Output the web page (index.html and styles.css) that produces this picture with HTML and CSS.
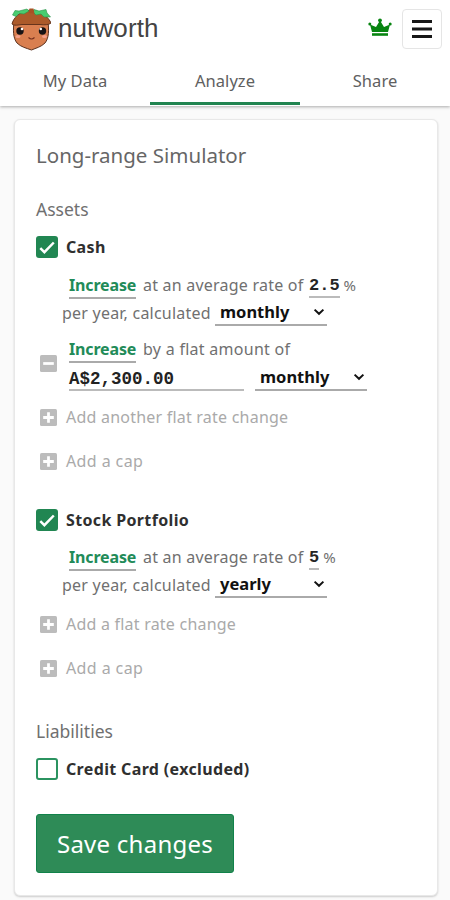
FILE: index.html
```
<!DOCTYPE html>
<html lang="en">
<head>
<meta charset="utf-8">
<title>nutworth</title>
<link rel="stylesheet" href="styles.css">
</head>
<body>
<svg width="0" height="0" class="defs" aria-hidden="true">
  <symbol id="tick" viewBox="0 0 22 22"><rect width="22" height="22" rx="3" fill="#218652"/><path d="M4.3 12.2 8.4 16.2 17.8 6.5" fill="none" stroke="#fff" stroke-width="2.5"/></symbol>
  <symbol id="plus" viewBox="0 0 16 16"><rect width="16" height="16" rx="1.5" fill="#bcbcbc"/><path d="M8 3v10M3 8h10" stroke="#fff" stroke-width="2.6"/></symbol>
  <symbol id="minus" viewBox="0 0 16 16"><rect width="16" height="16" rx="1.5" fill="#bcbcbc"/><path d="M3 8h10" stroke="#fff" stroke-width="2.6"/></symbol>
  <symbol id="chevron" viewBox="0 0 12 8"><path d="M1.6 1.6 6 5.8 10.4 1.6" fill="none" stroke="#111" stroke-width="2"/></symbol>
</svg>
<header class="header">
  <div class="topbar">
    <svg class="logo" width="41" height="44" viewBox="0 0 41 44">
      <path d="M4 15C3 23 3 31 7 36 11 40 16 41 21.500 43 26 41 31 40 35 36 39 31 39 23 38 15Z" fill="#d97f50" stroke="#5b3220" stroke-width="1"/>
      <path d="M2 17C3 12 9 4 20.500 3 32 4 39 11 41 16 39 18 34 18 30 17.500H12C8 18 4 19 2 17Z" fill="#ac5a2a" stroke="#66341c" stroke-width="1"/>
      <path d="M5 3.500 9 4 17 2 19 4 14 7 9 6.500 6 9.500 2.500 8Z" fill="#48cc70" stroke="#2b9149" stroke-width=".6"/>
      <path d="M24 2.500 29 4 36 2.500 37 6 40.500 10 34 10 31 7 26 8 23 5Z" fill="#48cc70" stroke="#2b9149" stroke-width=".6"/>
      <path d="M18.500 6 19.500 1.500h4l1 5Z" fill="#a85224"/>
      <circle cx="10" cy="24" r="3.700" fill="#171314"/><circle cx="32.500" cy="24" r="3.700" fill="#171314"/>
      <circle cx="12" cy="22" r="1.300" fill="#fff"/><circle cx="30.800" cy="22" r="1.300" fill="#fff"/>
      <path d="M18.500 30.500Q21.500 33.500 24.500 30.500" fill="none" stroke="#742f1e" stroke-width="1.100"/>
      <ellipse cx="8" cy="29.500" rx="2.500" ry="1.500" fill="#f5a08a"/><ellipse cx="34.500" cy="29.500" rx="2.500" ry="1.500" fill="#f5a08a"/>
    </svg>
    <span class="brand">nutworth</span>
    <svg class="crown" width="24" height="20" viewBox="0 0 24 20"><path d="M4 14 2 6.500 8 9 12 2.500 16 9 22 6.500 20 14Z" fill="#078410"/><path d="M4 15.200h16v2.600H4Z" fill="#078410"/><circle cx="1.800" cy="6" r="1.500" fill="#078410"/><circle cx="12" cy="2.300" r="1.900" fill="#078410"/><circle cx="22.200" cy="6" r="1.500" fill="#078410"/></svg>
    <button class="menu" aria-label="Menu"><svg width="20" height="20" viewBox="0 0 20 20"><path d="M0 2.500h20M0 10h20M0 17.500h20" stroke="#171717" stroke-width="2.800"/></svg></button>
  </div>
  <nav class="tabs"><a class="tab">My Data</a><a class="tab active">Analyze</a><a class="tab">Share</a></nav>
</header>
<main class="card">
  <h1 class="title">Long-range Simulator</h1>
  <h2 class="section assets">Assets</h2>
  <div class="item"><svg class="check"><use href="#tick"/></svg><b>Cash</b></div>
  <div class="rule">
    <div class="line first"><b class="increase">Increase</b><span class="rate">at an average rate of</span><b class="number">2.5</b><span class="percent">%</span></div>
    <div class="line"><span class="year">per year, calculated</span><div class="select"><b>monthly</b><svg class="chevron"><use href="#chevron"/></svg></div></div>
  </div>
  <div class="rule flat">
    <svg class="icon"><use href="#minus"/></svg>
    <div>
      <div class="line"><b class="increase">Increase</b><span class="amount-label">by a flat amount of</span></div>
      <div class="line"><b class="amount">A$2,300.00</b><div class="select raised"><b>monthly</b><svg class="chevron"><use href="#chevron"/></svg></div></div>
    </div>
  </div>
  <div class="add"><svg class="icon"><use href="#plus"/></svg><span>Add another flat rate change</span></div>
  <div class="add cap"><svg class="icon"><use href="#plus"/></svg><span class="cap-label">Add a cap</span></div>
  <div class="item stock"><svg class="check"><use href="#tick"/></svg><b>Stock Portfolio</b></div>
  <div class="rule after-item">
    <div class="line first"><b class="increase">Increase</b><span class="rate">at an average rate of</span><b class="number">5</b><span class="percent">%</span></div>
    <div class="line"><span class="year">per year, calculated</span><div class="select"><b>yearly</b><svg class="chevron"><use href="#chevron"/></svg></div></div>
  </div>
  <div class="add after-rate"><svg class="icon"><use href="#plus"/></svg><span>Add a flat rate change</span></div>
  <div class="add cap"><svg class="icon"><use href="#plus"/></svg><span class="cap-label">Add a cap</span></div>
  <h2 class="section liabilities">Liabilities</h2>
  <div class="item"><span class="check empty"></span><b>Credit Card (excluded)</b></div>
  <button class="save">Save changes</button>
</main>
</body>
</html>
```
FILE: styles.css
```
* { box-sizing: border-box; }
body { margin: 0; height: 900px; overflow: hidden; background: #fafafa; color: #707070; font: 16px/26px "Noto Sans", sans-serif; letter-spacing: .22px; }
svg { display: block; flex: none; }
b { font-weight: 700; }
.defs { position: absolute; }
.header { height: 106px; background: #fff; box-shadow: 0 1px 3px #aaa; }
.topbar { display: flex; align-items: flex-start; height: 60px; padding: 7px 8px 0 10px; }
.brand { margin: 5px 0 0 7px; font: 26px/32px "Liberation Sans", sans-serif; color: #444; letter-spacing: .1px; }
.crown { margin: 11px 10px 0 auto; }
.menu { display: grid; place-items: center; width: 40px; height: 40px; margin-top: 2px; padding: 0; border: 1px solid #e5e5e5; border-radius: 4px; background: #fff; }
.tabs { display: grid; grid-template-columns: repeat(3, 1fr); height: 45px; }
.tab { height: 45px; text-align: center; line-height: 41px; font-size: 16.5px; letter-spacing: .05px; color: #606060; }
.active { border-bottom: 3px solid #218450; }
.card { width: 424px; height: 777px; margin: 13px 0 0 14px; padding: 18px 21px 0; border: 1px solid #e8e8e8; border-radius: 6px; background: #fff; box-shadow: 0 1px 2px #ccc; }
.title { margin: 0; height: 34px; font-weight: 400; font-size: 20.5px; line-height: 34px; letter-spacing: 0; color: #666; }
.section { margin: 0 0 12px; height: 26px; font-weight: 400; font-size: 17.5px; letter-spacing: 0; }
.assets { margin-top: 24px; }
.item { display: flex; align-items: center; gap: 8px; height: 26px; color: #2f2f2f; letter-spacing: .35px; white-space: nowrap; }
.check { width: 22px; height: 22px; }
.empty { border: 2px solid #2b9360; border-radius: 3px; }
.rule { margin-top: 11px; padding-left: 26px; white-space: nowrap; }
.line { display: flex; height: 28px; line-height: 28px; }
.first .increase { margin-left: 7px; }
.increase { width: 67px; height: 28px; border-bottom: 2px solid #aaa; color: #218b58; letter-spacing: -.15px; }
.rate { width: 159px; margin-left: 7px; }
.number { height: 27px; margin-left: 7px; border-bottom: 2px solid #bbb; color: #252525; font: 700 17px/30px "Liberation Mono", monospace; letter-spacing: 0; }
.percent { margin-left: 4px; font-size: 15px; }
.year { width: 149px; }
.select { display: flex; align-items: center; justify-content: space-between; width: 112px; height: 27px; margin-left: 4px; padding: 1px 2px 0 5px; border-bottom: 2px solid #aaa; color: #111; font-size: 16.5px; letter-spacing: 0; }
.chevron { width: 12px; height: 8px; }
.flat { display: flex; align-items: center; gap: 12px; margin-top: 8px; padding-left: 4px; }
.icon { width: 17px; height: 17px; }
.amount-label { margin-left: 7px; letter-spacing: .28px; }
.amount { width: 175px; height: 28px; border-bottom: 2px solid #bbb; color: #222; font: 700 17.5px/32px "Liberation Mono", monospace; letter-spacing: 0; }
.flat .raised { height: 28px; margin-left: 11px; }
.add { display: flex; align-items: center; gap: 9px; height: 26px; margin-top: 13px; padding-left: 4px; color: #aaa; white-space: nowrap; }
.cap { margin-top: 18px; }
.cap-label { letter-spacing: .4px; }
.stock { margin-top: 33px; }
.rule.after-item { margin-top: 10px; }
.after-rate { margin-top: 12px; }
.liabilities { margin-top: 37px; }
.save { display: block; width: 198px; height: 59px; margin-top: 32px; padding: 0; border: 1px solid #11824a; border-radius: 3px; background: #2e8b57; color: #fff; font: 24px/56px "Noto Sans", sans-serif; letter-spacing: .25px; }
```
